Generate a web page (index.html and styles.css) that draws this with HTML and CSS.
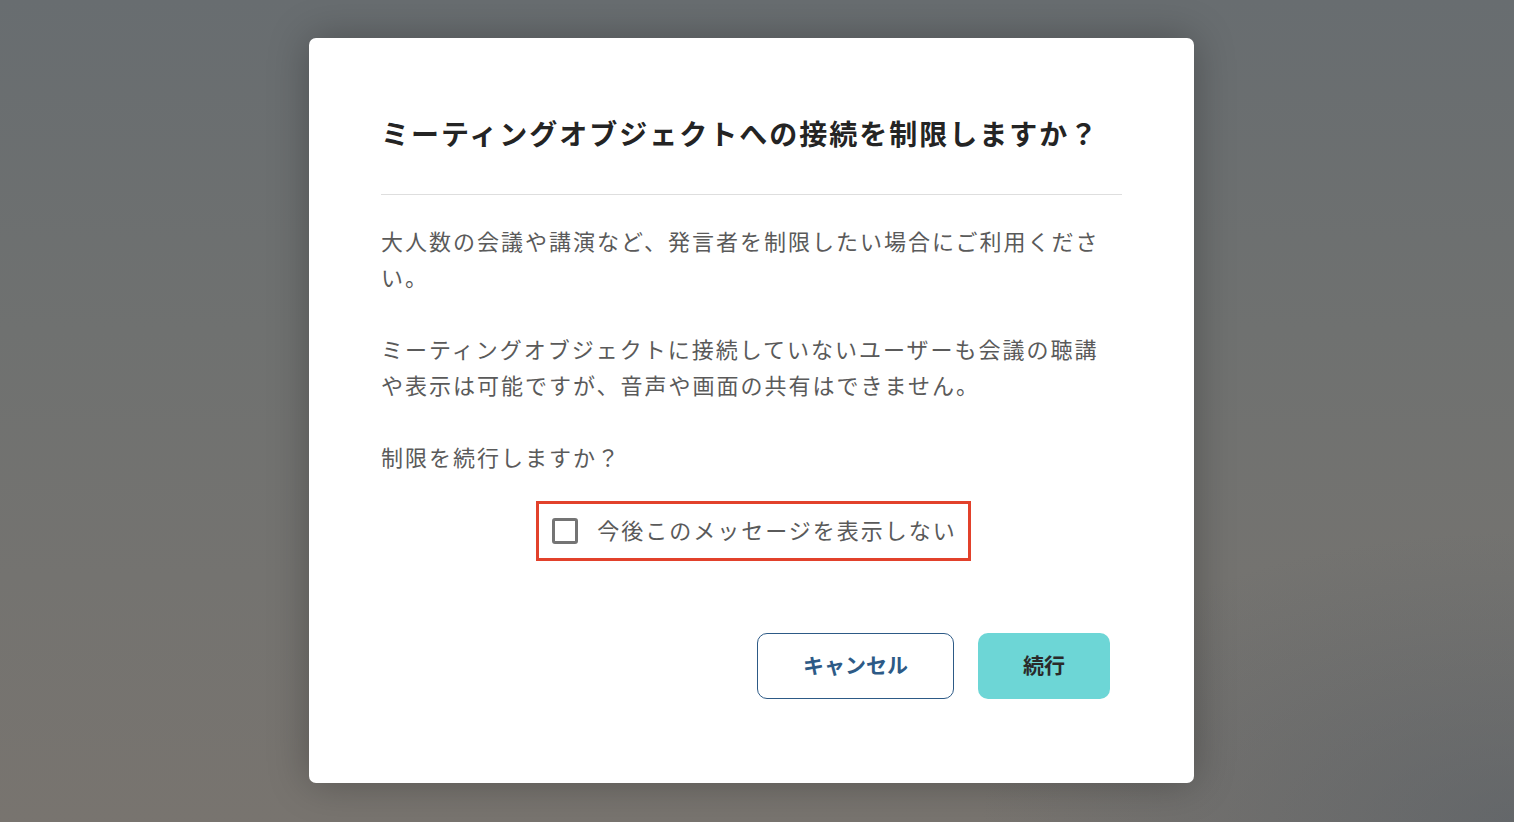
FILE: index.html
```html
<!DOCTYPE html>
<html lang="ja">
<head>
    <meta charset="UTF-8">
    <meta name="viewport" content="width=device-width, initial-scale=1.0">
    <title>接続制限の確認</title>
    <link rel="stylesheet" href="styles.css">
</head>
<body>
    <div class="backdrop">
        <div class="modal" role="dialog" aria-labelledby="modalTitle">
            <div class="modal-header">
                <h1 id="modalTitle">ミーティングオブジェクトへの接続を制限しますか？</h1>
            </div>

            <div class="modal-body">
                <p>大人数の会議や講演など、発言者を制限したい場合にご利用ください。</p>
                <p>ミーティングオブジェクトに接続していないユーザーも会議の聴講や表示は可能ですが、音声や画面の共有はできません。</p>
                <p>制限を続行しますか？</p>

                <div class="check-wrap">
                    <label class="check-row">
                        <input type="checkbox" class="check-input">
                        <span class="check-box"></span>
                        <span class="check-label">今後このメッセージを表示しない</span>
                    </label>
                </div>
            </div>

            <div class="modal-footer">
                <button class="btn btn-outline">キャンセル</button>
                <button class="btn btn-primary">続行</button>
            </div>
        </div>
    </div>
</body>
</html>
```

FILE: styles.css
```css
* {
    margin: 0;
    padding: 0;
    box-sizing: border-box;
}

body {
    font-family: "Noto Sans CJK JP", "Noto Sans", sans-serif;
    height: 100vh;
    overflow: hidden;
}

.backdrop {
    height: 100vh;
    display: flex;
    align-items: center;
    justify-content: center;
    padding-right: 11px;
    padding-bottom: 1px;
    background:
        radial-gradient(ellipse at 100% 100%, rgba(80, 90, 100, 0.5) 0%, rgba(80, 90, 100, 0) 25%),
        linear-gradient(180deg, #686d70 0%, #6f7170 40%, #747370 70%, #78746f 100%);
}

.modal {
    width: 885px;
    height: 745px;
    background: #ffffff;
    border-radius: 7px;
    box-shadow: 0 0 40px rgba(0, 0, 0, 0.28);
    display: flex;
    flex-direction: column;
}

.modal-header {
    margin: 0 72px;
    padding: 75px 0 41px;
    border-bottom: 1px solid #dedede;
}

.modal-header h1 {
    font-size: 28px;
    line-height: 40px;
    font-weight: 700;
    letter-spacing: 2px;
    color: #242424;
    white-space: nowrap;
}

.modal-body {
    padding: 27px 72px 0;
    flex: 1;
}

.modal-body p {
    font-size: 22px;
    line-height: 36px;
    letter-spacing: 2px;
    color: #5a5a5a;
    margin-bottom: 36px;
}

.modal-body p:nth-of-type(3) {
    margin-bottom: 27px;
}

.check-wrap {
    display: flex;
    justify-content: center;
    padding-left: 4px;
}

.check-row {
    display: flex;
    align-items: center;
    gap: 19px;
    height: 60px;
    padding: 0 13px;
    border: 3px solid #e2412b;
    cursor: pointer;
}

.check-input {
    display: none;
}

.check-box {
    width: 26px;
    height: 26px;
    border: 3px solid #747474;
    border-radius: 3px;
    flex-shrink: 0;
}

.check-input:checked + .check-box {
    background: #747474;
}

.check-label {
    font-size: 22px;
    letter-spacing: 2px;
    color: #5a5a5a;
    margin-right: -2px;
    margin-top: -4px;
}

.modal-footer {
    display: flex;
    justify-content: flex-end;
    gap: 24px;
    padding: 0 84px 84px;
}

.btn {
    height: 66px;
    padding-bottom: 4px;
    border-radius: 10px;
    font-family: inherit;
    font-size: 21px;
    font-weight: 700;
    letter-spacing: 0;
    cursor: pointer;
}

.btn-outline {
    width: 197px;
    background: #ffffff;
    border: 1px solid #2d5a86;
    color: #2d5a86;
}

.btn-primary {
    width: 132px;
    background: #6dd6d6;
    border: none;
    color: #2a2a2a;
}
```
